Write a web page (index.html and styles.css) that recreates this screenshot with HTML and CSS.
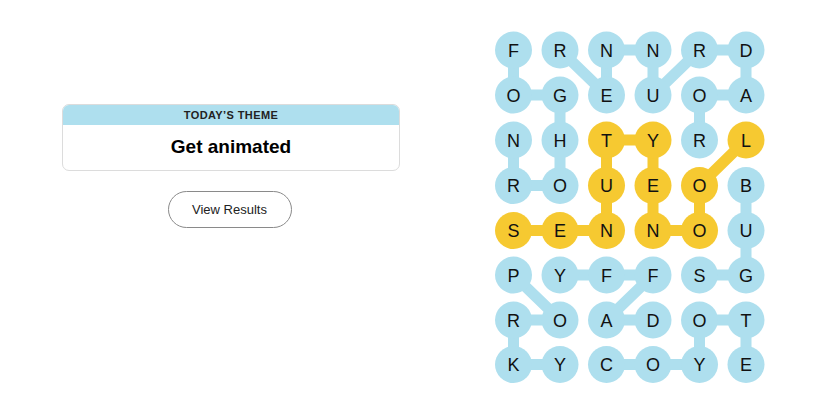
FILE: index.html
```html
<!DOCTYPE html>
<html lang="en">
<head>
<meta charset="utf-8">
<title>Strands</title>
<link rel="stylesheet" href="styles.css">
</head>
<body>
<div class="page">
  <section class="left">
    <div class="theme-card">
      <div class="theme-head">TODAY’S THEME</div>
      <div class="theme-body">Get animated</div>
    </div>
    <button class="results-btn">View Results</button>
  </section>
  <section class="board">
    <svg class="grid" width="270" height="352" viewBox="495 31 270 352" xmlns="http://www.w3.org/2000/svg">
      <g class="link blue">
        <polyline points="513.5,50 513.5,95 560,95 560,185.5 513.5,185.5 513.5,140"/>
        <polyline points="560,50 606.5,95 606.5,50 653,50 653,95 699.5,50 746,50 746,95 699.5,95 699.5,140"/>
        <polyline points="746,185.5 746,230.5 746,275 699.5,275"/>
        <polyline points="513.5,275 560,320 513.5,320 513.5,364.5 560,364.5"/>
        <polyline points="560,275 606.5,275 653,275 606.5,320 653,320"/>
        <polyline points="606.5,364.5 653,364.5 699.5,364.5 699.5,320 746,320 746,364.5"/>
      </g>
      <g class="link gold">
        <polyline points="746,140 699.5,185.5 699.5,230.5 653,230.5 653,185.5 653,140 606.5,140 606.5,185.5 606.5,230.5 560,230.5 513.5,230.5"/>
      </g>
      <g class="dots blue">
        <circle cx="513.5" cy="50" r="18.5"/><circle cx="560" cy="50" r="18.5"/><circle cx="606.5" cy="50" r="18.5"/><circle cx="653" cy="50" r="18.5"/><circle cx="699.5" cy="50" r="18.5"/><circle cx="746" cy="50" r="18.5"/>
        <circle cx="513.5" cy="95" r="18.5"/><circle cx="560" cy="95" r="18.5"/><circle cx="606.5" cy="95" r="18.5"/><circle cx="653" cy="95" r="18.5"/><circle cx="699.5" cy="95" r="18.5"/><circle cx="746" cy="95" r="18.5"/>
        <circle cx="513.5" cy="140" r="18.5"/><circle cx="560" cy="140" r="18.5"/><circle cx="699.5" cy="140" r="18.5"/>
        <circle cx="513.5" cy="185.5" r="18.5"/><circle cx="560" cy="185.5" r="18.5"/><circle cx="746" cy="185.5" r="18.5"/>
        <circle cx="746" cy="230.5" r="18.5"/>
        <circle cx="513.5" cy="275" r="18.5"/><circle cx="560" cy="275" r="18.5"/><circle cx="606.5" cy="275" r="18.5"/><circle cx="653" cy="275" r="18.5"/><circle cx="699.5" cy="275" r="18.5"/><circle cx="746" cy="275" r="18.5"/>
        <circle cx="513.5" cy="320" r="18.5"/><circle cx="560" cy="320" r="18.5"/><circle cx="606.5" cy="320" r="18.5"/><circle cx="653" cy="320" r="18.5"/><circle cx="699.5" cy="320" r="18.5"/><circle cx="746" cy="320" r="18.5"/>
        <circle cx="513.5" cy="364.5" r="18.5"/><circle cx="560" cy="364.5" r="18.5"/><circle cx="606.5" cy="364.5" r="18.5"/><circle cx="653" cy="364.5" r="18.5"/><circle cx="699.5" cy="364.5" r="18.5"/><circle cx="746" cy="364.5" r="18.5"/>
      </g>
      <g class="dots gold">
        <circle cx="606.5" cy="140" r="18.5"/><circle cx="653" cy="140" r="18.5"/><circle cx="746" cy="140" r="18.5"/>
        <circle cx="606.5" cy="185.5" r="18.5"/><circle cx="653" cy="185.5" r="18.5"/><circle cx="699.5" cy="185.5" r="18.5"/>
        <circle cx="513.5" cy="230.5" r="18.5"/><circle cx="560" cy="230.5" r="18.5"/><circle cx="606.5" cy="230.5" r="18.5"/><circle cx="653" cy="230.5" r="18.5"/><circle cx="699.5" cy="230.5" r="18.5"/>
      </g>
      <g class="letters">
        <text x="513.5" y="56.5">F</text><text x="560" y="56.5">R</text><text x="606.5" y="56.5">N</text><text x="653" y="56.5">N</text><text x="699.5" y="56.5">R</text><text x="746" y="56.5">D</text>
        <text x="513.5" y="101.5">O</text><text x="560" y="101.5">G</text><text x="606.5" y="101.5">E</text><text x="653" y="101.5">U</text><text x="699.5" y="101.5">O</text><text x="746" y="101.5">A</text>
        <text x="513.5" y="146.5">N</text><text x="560" y="146.5">H</text><text x="606.5" y="146.5">T</text><text x="653" y="146.5">Y</text><text x="699.5" y="146.5">R</text><text x="746" y="146.5">L</text>
        <text x="513.5" y="192">R</text><text x="560" y="192">O</text><text x="606.5" y="192">U</text><text x="653" y="192">E</text><text x="699.5" y="192">O</text><text x="746" y="192">B</text>
        <text x="513.5" y="237">S</text><text x="560" y="237">E</text><text x="606.5" y="237">N</text><text x="653" y="237">N</text><text x="699.5" y="237">O</text><text x="746" y="237">U</text>
        <text x="513.5" y="281.5">P</text><text x="560" y="281.5">Y</text><text x="606.5" y="281.5">F</text><text x="653" y="281.5">F</text><text x="699.5" y="281.5">S</text><text x="746" y="281.5">G</text>
        <text x="513.5" y="326.5">R</text><text x="560" y="326.5">O</text><text x="606.5" y="326.5">A</text><text x="653" y="326.5">D</text><text x="699.5" y="326.5">O</text><text x="746" y="326.5">T</text>
        <text x="513.5" y="371">K</text><text x="560" y="371">Y</text><text x="606.5" y="371">C</text><text x="653" y="371">O</text><text x="699.5" y="371">Y</text><text x="746" y="371">E</text>
      </g>
    </svg>
  </section>
</div>
</body>
</html>
```
FILE: styles.css
```css
* { box-sizing: border-box; }
html, body {
  margin: 0;
  padding: 0;
  background: #ffffff;
}
body {
  font-family: "Liberation Sans", Arial, sans-serif;
  color: #121212;
}
.page {
  display: flex;
  width: 825px;
  height: 413px;
}
.left {
  width: 400px;
  padding-left: 62px;
  padding-top: 104px;
  display: flex;
  flex-direction: column;
  align-items: center;
}
.theme-card {
  width: 338px;
  height: 67px;
  border: 1px solid #dcdcdc;
  border-radius: 7px;
  overflow: hidden;
  display: flex;
  flex-direction: column;
}
.theme-head {
  height: 20px;
  background: #aedfee;
  font-size: 11px;
  font-weight: bold;
  letter-spacing: 0.4px;
  line-height: 20px;
  text-align: center;
  color: #222;
}
.theme-body {
  flex: 1;
  display: flex;
  align-items: center;
  justify-content: center;
  font-size: 19px;
  font-weight: bold;
  color: #000;
  padding-bottom: 2px;
}
.results-btn {
  margin-top: 20px;
  margin-right: 3px;
  width: 124px;
  height: 37px;
  border: 1px solid #8a8a8a;
  border-radius: 19px;
  background: #fff;
  font-family: "Liberation Sans", Arial, sans-serif;
  font-size: 13px;
  color: #222;
  padding: 0;
}
.board {
  padding-left: 95px;
  padding-top: 31px;
}
.grid { display: block; }
.link polyline {
  fill: none;
  stroke-width: 11;
  stroke-linejoin: round;
  stroke-linecap: round;
}
.link.blue polyline { stroke: #aedfee; }
.link.gold polyline { stroke: #f6c931; }
.dots.blue circle { fill: #aedfee; }
.dots.gold circle { fill: #f6c931; }
.letters text {
  font-family: "Liberation Sans", Arial, sans-serif;
  font-size: 18px;
  fill: #111;
  text-anchor: middle;
}
```
